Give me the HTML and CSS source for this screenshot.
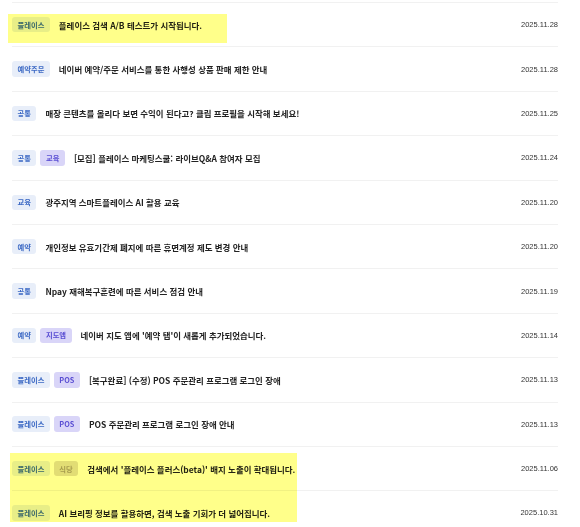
FILE: index.html
```html
<!DOCTYPE html>
<html lang="ko">
<head>
  <meta charset="UTF-8" />
  <meta name="viewport" content="width=device-width, initial-scale=1.0" />
  <title>공지사항</title>
  <link rel="stylesheet" href="styles.css">
</head>
<body>
  <div class="notice-list">
    <div class="row">
      <div class="tags"><span class="tag">플레이스</span></div>
      <span class="title">플레이스 검색 A/B 테스트가 시작됩니다.</span>
      <span class="date">2025.11.28</span>
    </div>
    <div class="row">
      <div class="tags"><span class="tag">예약주문</span></div>
      <span class="title">네이버 예약/주문 서비스를 통한 사행성 상품 판매 제한 안내</span>
      <span class="date">2025.11.28</span>
    </div>
    <div class="row">
      <div class="tags"><span class="tag">공통</span></div>
      <span class="title">매장 콘텐츠를 올리다 보면 수익이 된다고? 클립 프로필을 시작해 보세요!</span>
      <span class="date">2025.11.25</span>
    </div>
    <div class="row">
      <div class="tags"><span class="tag">공통</span><span class="tag purple">교육</span></div>
      <span class="title">[모집] 플레이스 마케팅스쿨: 라이브Q&amp;A 참여자 모집</span>
      <span class="date">2025.11.24</span>
    </div>
    <div class="row">
      <div class="tags"><span class="tag">교육</span></div>
      <span class="title">광주지역 스마트플레이스 AI 활용 교육</span>
      <span class="date">2025.11.20</span>
    </div>
    <div class="row">
      <div class="tags"><span class="tag">예약</span></div>
      <span class="title">개인정보 유효기간제 폐지에 따른 휴면계정 제도 변경 안내</span>
      <span class="date">2025.11.20</span>
    </div>
    <div class="row">
      <div class="tags"><span class="tag">공통</span></div>
      <span class="title">Npay 재해복구훈련에 따른 서비스 점검 안내</span>
      <span class="date">2025.11.19</span>
    </div>
    <div class="row">
      <div class="tags"><span class="tag">예약</span><span class="tag purple">지도앱</span></div>
      <span class="title">네이버 지도 앱에 '예약 탭'이 새롭게 추가되었습니다.</span>
      <span class="date">2025.11.14</span>
    </div>
    <div class="row">
      <div class="tags"><span class="tag">플레이스</span><span class="tag purple">POS</span></div>
      <span class="title">[복구완료] (수정) POS 주문관리 프로그램 로그인 장애</span>
      <span class="date">2025.11.13</span>
    </div>
    <div class="row">
      <div class="tags"><span class="tag">플레이스</span><span class="tag purple">POS</span></div>
      <span class="title">POS 주문관리 프로그램 로그인 장애 안내</span>
      <span class="date">2025.11.13</span>
    </div>
    <div class="row">
      <div class="tags"><span class="tag">플레이스</span><span class="tag gray">식당</span></div>
      <span class="title">검색에서 '플레이스 플러스(beta)' 배지 노출이 확대됩니다.</span>
      <span class="date">2025.11.06</span>
    </div>
    <div class="row">
      <div class="tags"><span class="tag">플레이스</span></div>
      <span class="title">AI 브리핑 정보를 활용하면, 검색 노출 기회가 더 넓어집니다.</span>
      <span class="date">2025.10.31</span>
    </div>

    <!-- highlighter marks -->
    <span class="marker marker-top"></span>
    <span class="marker marker-bottom"></span>
  </div>
</body>
</html>
```

FILE: styles.css
```css
* {
  box-sizing: border-box;
  margin: 0;
  padding: 0;
}

body {
  background: #fff;
  color: #222;
  font-family: "Noto Sans CJK KR", "Noto Sans", sans-serif;
}

.notice-list {
  position: relative;
  margin: 2px 22px 0 12px;
  border-top: 1px solid #f1f1f1;
}

.row {
  display: flex;
  align-items: center;
  height: 44.4px;
  border-bottom: 1px solid #f1f1f1;
}

.tags {
  display: flex;
  gap: 4px;
  margin-right: 9px;
}

.tag {
  display: inline-flex;
  align-items: center;
  height: 15.5px;
  padding: 0 5.5px;
  border-radius: 3px;
  background: #e8eef9;
  color: #3b68c4;
  font-size: 7.3px;
  font-weight: 700;
  white-space: nowrap;
}

.tag.purple {
  background: #d9d5f8;
  color: #5a4ed3;
}

.tag.gray {
  background: #e2ddd6;
  color: #a69c8e;
}

.title {
  flex: 1;
  font-size: 8.45px;
  font-weight: 700;
  color: #222;
  white-space: nowrap;
}

.date {
  font-family: "Liberation Sans", Arial, sans-serif;
  font-size: 7.5px;
  color: #333;
}

.marker {
  position: absolute;
  background: #ffff8a;
  mix-blend-mode: multiply;
  pointer-events: none;
}

.marker-top {
  left: -4px;
  top: 11px;
  width: 219px;
  height: 29px;
}

.marker-bottom {
  left: -2px;
  top: 450px;
  width: 287px;
  height: 69px;
}
```
